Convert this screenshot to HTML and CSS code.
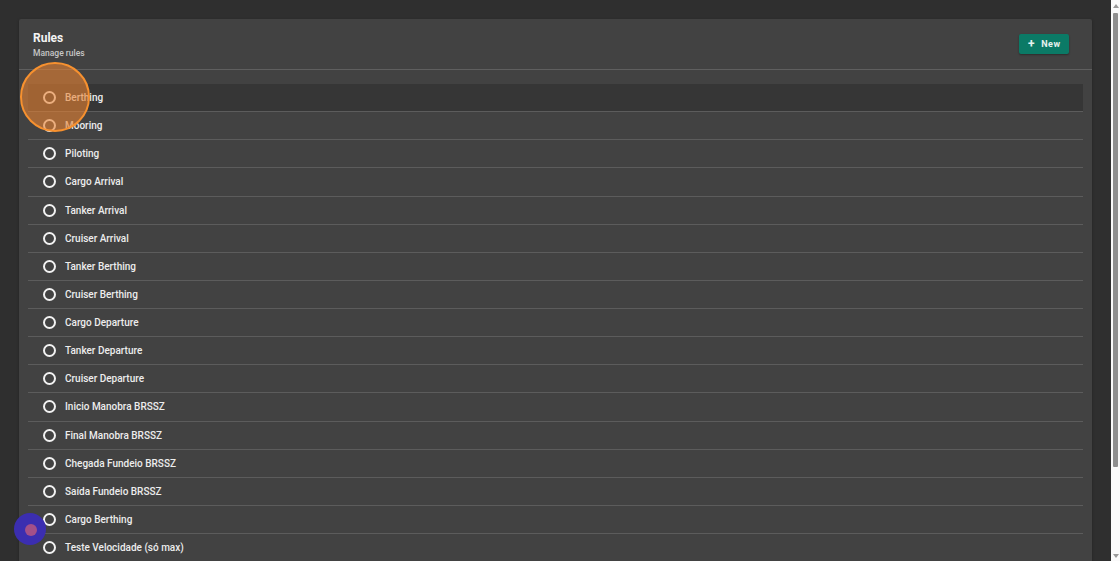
FILE: index.html
```html
<!DOCTYPE html>
<html>
<head>
<meta charset="utf-8">
<link rel="stylesheet" href="styles.css">
</head>
<body>
<div class="page">
  <section class="card">
    <header class="card-head">
      <div class="titles">
        <div class="title">Rules</div>
        <div class="subtitle">Manage rules</div>
      </div>
      <button class="btn-new"><span class="plus">+</span><span>New</span></button>
    </header>
    <ul class="list">
      <li class="row hover"><span class="radio"></span><span class="label">Berthing</span></li>
      <li class="row"><span class="radio"></span><span class="label">Mooring</span></li>
      <li class="row"><span class="radio"></span><span class="label">Piloting</span></li>
      <li class="row"><span class="radio"></span><span class="label">Cargo Arrival</span></li>
      <li class="row"><span class="radio"></span><span class="label">Tanker Arrival</span></li>
      <li class="row"><span class="radio"></span><span class="label">Cruiser Arrival</span></li>
      <li class="row"><span class="radio"></span><span class="label">Tanker Berthing</span></li>
      <li class="row"><span class="radio"></span><span class="label">Cruiser Berthing</span></li>
      <li class="row"><span class="radio"></span><span class="label">Cargo Departure</span></li>
      <li class="row"><span class="radio"></span><span class="label">Tanker Departure</span></li>
      <li class="row"><span class="radio"></span><span class="label">Cruiser Departure</span></li>
      <li class="row"><span class="radio"></span><span class="label">Inicio Manobra BRSSZ</span></li>
      <li class="row"><span class="radio"></span><span class="label">Final Manobra BRSSZ</span></li>
      <li class="row"><span class="radio"></span><span class="label">Chegada Fundeio BRSSZ</span></li>
      <li class="row"><span class="radio"></span><span class="label">Saída Fundeio BRSSZ</span></li>
      <li class="row"><span class="radio"></span><span class="label">Cargo Berthing</span></li>
      <li class="row"><span class="radio"></span><span class="label">Teste Velocidade (só max)</span></li>
    </ul>
  </section>
</div>
<div class="click-marker"></div>
<div class="fab-dot"><span></span></div>
<div class="fake-scroll">
  <span class="arrow up"></span>
  <span class="thumb"></span>
  <span class="arrow down"></span>
</div>
</body>
</html>
```
FILE: styles.css
```css
html, body {
  margin: 0;
  padding: 0;
  background: #2f2f2f;
  font-family: Roboto, "Noto Sans", "Liberation Sans", sans-serif;
  color: #ececec;
  overflow: hidden;
  height: 561px;
}
.page {
  padding: 19px 19px 0 19px;
  width: 1073px;
}
.card {
  background: #424242;
  border-radius: 2px 2px 0 0;
  box-shadow: 0 1px 3px rgba(0,0,0,0.3);
  padding-bottom: 20px;
}
.card-head {
  display: flex;
  justify-content: space-between;
  align-items: flex-start;
  padding: 12px 23px 0 14px;
  height: 38px;
  border-bottom: 1px solid #5f5f5f;
}
.title {
  font-size: 12px;
  font-weight: 700;
  color: #f4f4f4;
  line-height: 15px;
}
.subtitle {
  font-size: 8.5px;
  font-weight: 500;
  color: #c6c6c6;
  margin-top: 2px;
  line-height: 11px;
}
.btn-new {
  margin-top: 3px;
  display: flex;
  align-items: center;
  gap: 6px;
  height: 20px;
  width: 50px;
  padding: 0 0 0 9px;
  background: #0b7a66;
  border: none;
  border-radius: 2px;
  color: #e6f2ee;
  font-family: Roboto, "Noto Sans", sans-serif;
  font-size: 9px;
  font-weight: 700;
  letter-spacing: 0.6px;
  box-shadow: 0 1px 2px rgba(0,0,0,0.35);
}
.plus {
  font-size: 12px;
  font-weight: 700;
  line-height: 1;
  margin-top: -1px;
}
.list {
  list-style: none;
  margin: 0;
  padding: 14px 9px 0 9px;
}
.row {
  display: flex;
  align-items: center;
  height: 27.13px;
  border-bottom: 1px solid #5c5c5c;
  padding-left: 15px;
}
.row.hover {
  background: #363636;
}
.radio {
  width: 9px;
  height: 9px;
  border: 2px solid #f2f2f2;
  border-radius: 50%;
  flex: none;
}
.label {
  margin-left: 9px;
  font-size: 10px;
  font-weight: 500;
  color: #ededed;
}
.click-marker {
  position: absolute;
  left: 20px;
  top: 62px;
  width: 66px;
  height: 66px;
  border: 2.5px solid #f7912f;
  border-radius: 50%;
  background: rgba(232, 130, 50, 0.6);
}
.fab-dot {
  position: fixed;
  left: 14px;
  top: 513px;
  width: 32px;
  height: 32px;
  border-radius: 50%;
  background: #3b2eb0;
  display: flex;
  align-items: center;
  justify-content: center;
}
.fab-dot span {
  width: 12px;
  height: 12px;
  border-radius: 50%;
  background: #a35089;
  margin-left: 2px;
  margin-top: 2px;
}
.fake-scroll {
  position: fixed;
  top: 0;
  right: 0;
  width: 9px;
  height: 561px;
  background: #fafafa;
}
.thumb {
  position: absolute;
  left: 1.5px;
  top: 13px;
  width: 5.5px;
  height: 454px;
  background: #8f8f8f;
  border-radius: 1px;
}
.arrow {
  position: absolute;
  left: 1.5px;
  width: 0;
  height: 0;
  border-left: 3px solid transparent;
  border-right: 3px solid transparent;
}
.arrow.up {
  top: 4px;
  border-bottom: 4px solid #9a9a9a;
}
.arrow.down {
  bottom: 3px;
  border-top: 4px solid #9a9a9a;
}
```
